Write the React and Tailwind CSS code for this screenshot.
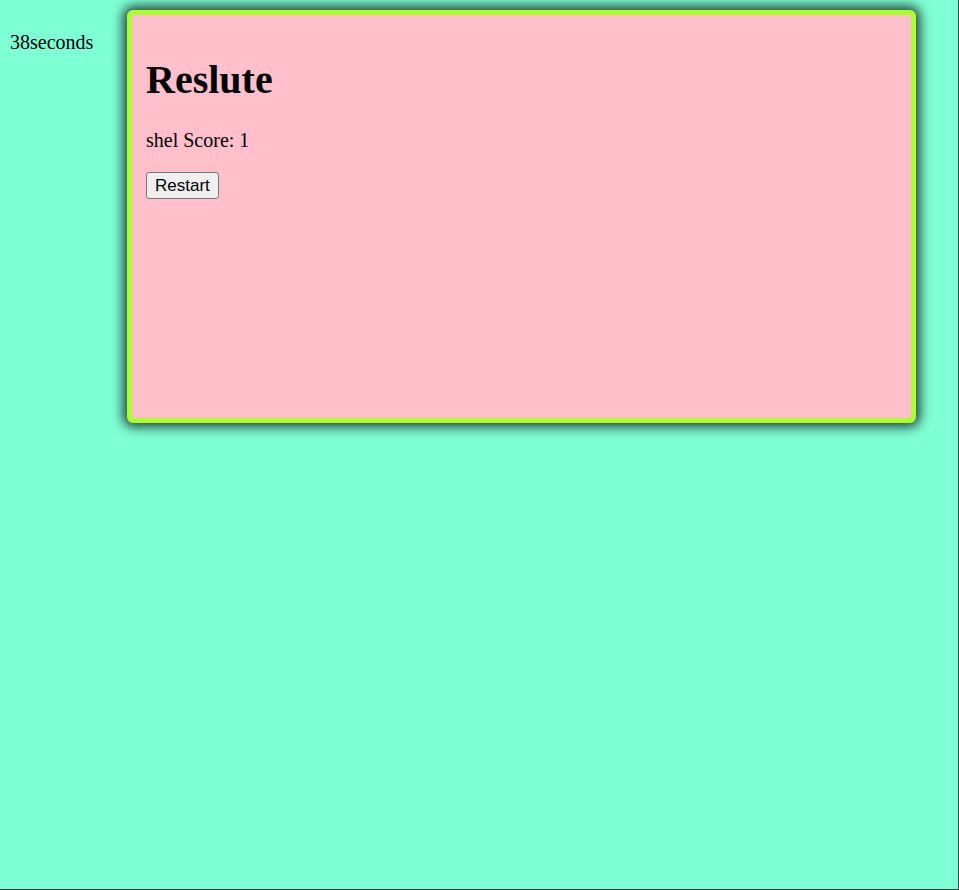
export default function App() {
  return (
    <div
      className="w-[959px] h-[890px] bg-[#7fffd4] border-r border-b border-[#2a4848] flex items-start"
      style={{ fontFamily: '"Liberation Serif", "Times New Roman", serif' }}
    >
      <div className="w-[127px] shrink-0 pl-[10px] pt-[31px] text-[20px] leading-[23px] text-black">
        38seconds
      </div>
      <div className="mt-[10px] w-[789px] h-[413px] shrink-0 bg-[#ffc0cb] border-[5px] border-[#adff2f] rounded-[6px] shadow-[0_0_12px_4px_rgba(0,0,0,0.75)] px-[14px] pt-[15px]">
        <h1 className="text-[40px] leading-[46px] font-bold mt-[27px] mb-[26px] text-black">Reslute</h1>
        <p className="text-[20px] leading-[23px] mb-[20px] text-black">shel Score: 1</p>
        <button
          className="h-[27px] px-[8px] text-[17px] leading-[20px] bg-[#efefef] border border-[#767676] rounded-[3px] text-black"
          style={{ fontFamily: '"Liberation Sans", Arial, sans-serif' }}
        >
          Restart
        </button>
      </div>
    </div>
  );
}
